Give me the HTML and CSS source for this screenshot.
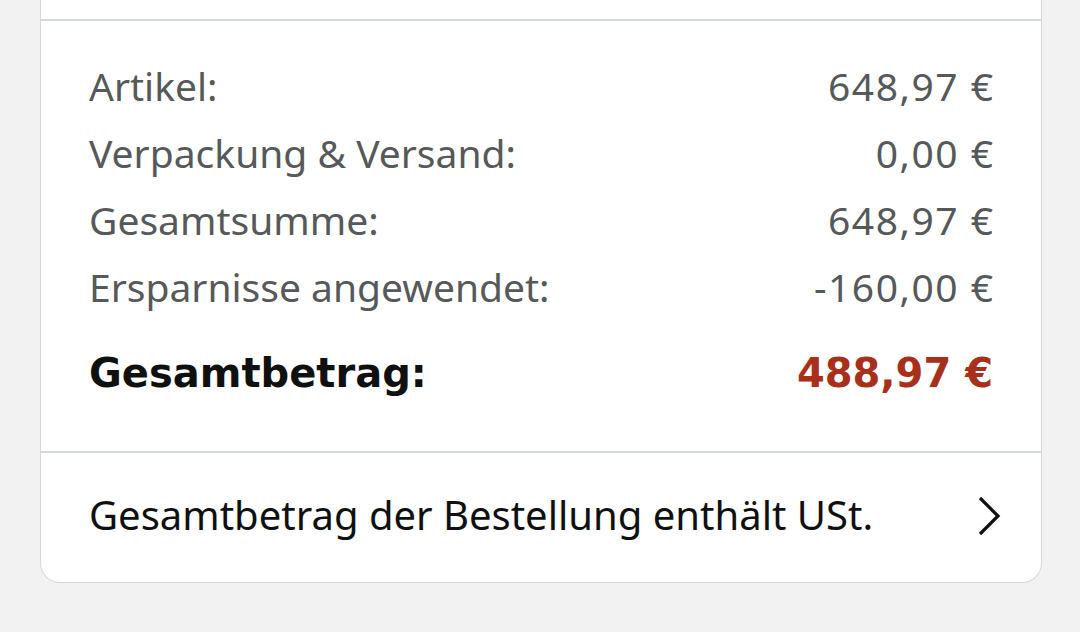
FILE: index.html
```html
<!DOCTYPE html>
<html lang="de">
<head>
<meta charset="utf-8">
<link rel="stylesheet" href="styles.css">
</head>
<body>
<div class="card">
  <div class="card-top"></div>
  <div class="summary">
    <div class="row"><span>Artikel:</span><span class="amount">648,97 €</span></div>
    <div class="row"><span>Verpackung &amp; Versand:</span><span class="amount">0,00 €</span></div>
    <div class="row"><span>Gesamtsumme:</span><span class="amount">648,97 €</span></div>
    <div class="row"><span>Ersparnisse angewendet:</span><span class="amount">-160,00 €</span></div>
    <div class="row total"><span>Gesamtbetrag:</span><span class="price">488,97 €</span></div>
  </div>
  <div class="footer">
    <span class="footer-text">Gesamtbetrag der Bestellung enthält USt.</span>
    <svg class="chev" width="24" height="40" viewBox="0 0 24 40"><path d="M3 2 L21 20 L3 38" fill="none" stroke="#0f1111" stroke-width="3.2"/></svg>
  </div>
</div>
</body>
</html>
```
FILE: styles.css
```css
html, body {
  margin: 0;
  padding: 0;
  background: #f2f2f2;
}
body {
  font-family: "Noto Sans", "Open Sans", sans-serif;
  width: 1080px;
  height: 632px;
  overflow: hidden;
}
.card {
  margin-left: 40px;
  width: 1000px;
  background: #fff;
  border: 1px solid #d5d9d9;
  border-top: none;
  border-radius: 0 0 20px 20px;
}
.card-top {
  height: 19px;
}
.summary {
  border-top: 2px solid #d5d9d9;
  padding: 31px 48px 44px 48px;
}
.row {
  display: flex;
  justify-content: space-between;
  font-size: 39px;
  line-height: 67px;
  color: #565959;
}
.amount {
  letter-spacing: 1.5px;
  margin-right: -1.5px;
}
.row.total {
  margin-top: 20px;
  font-family: "DejaVu Sans", "Noto Sans", sans-serif;
  font-size: 40px;
  font-weight: 700;
  color: #0f1111;
}
.price {
  color: #a8301a;
}
.footer {
  border-top: 2px solid #d5d9d9;
  display: flex;
  justify-content: space-between;
  align-items: center;
  height: 123px;
  padding: 0 40px 6px 48px;
  font-size: 40px;
  color: #0f1111;
}
.chev {
  display: block;
  margin-top: 2px;
}
```
